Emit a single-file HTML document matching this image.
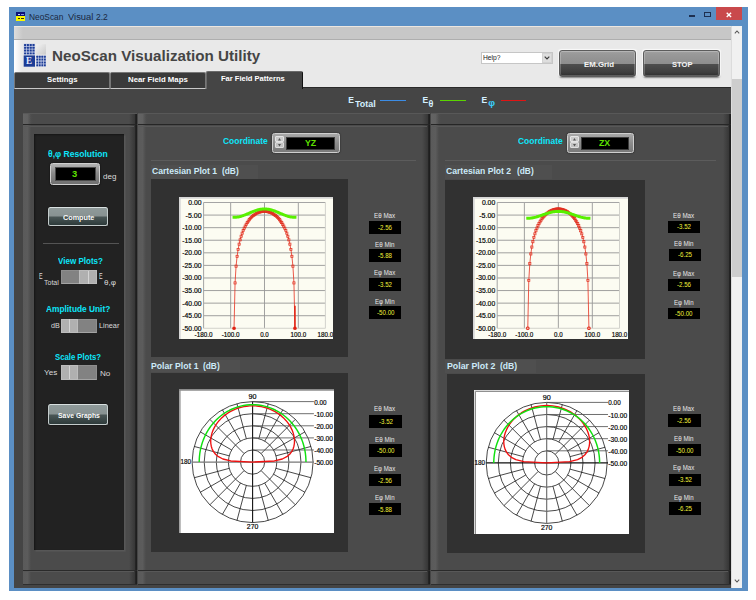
<!DOCTYPE html>
<html><head><meta charset="utf-8"><title>NeoScan Visual 2.2</title>
<style>
html,body{margin:0;padding:0;}
body{width:756px;height:600px;background:#fff;position:relative;overflow:hidden;font-family:"Liberation Sans",sans-serif;}
.t{position:absolute;white-space:nowrap;line-height:1.15;transform-origin:0 50%;display:block;}
</style></head><body>
<div style="position:absolute;left:9.00px;top:7.00px;width:738.80px;height:584.00px;background:#5b8fc4;"></div>
<div style="position:absolute;left:15.80px;top:11.80px;width:9.50px;height:9.00px;background:#f8f800;"></div>
<div style="position:absolute;left:15.80px;top:11.80px;width:9.50px;height:4.00px;background:#0c1478;"></div>
<div style="position:absolute;left:17.50px;top:13.50px;width:2.00px;height:1.00px;background:#c8d0ff;"></div>
<div style="position:absolute;left:21.00px;top:13.50px;width:2.50px;height:1.00px;background:#8090e0;"></div>
<div style="position:absolute;left:17.50px;top:18.20px;width:2.00px;height:1.00px;background:#403000;"></div>
<div style="position:absolute;left:21.00px;top:18.20px;width:2.50px;height:1.00px;background:#403000;"></div>
<span class="t " style="left:29.00px;top:11.08px;font-size:9.6px;color:#1a2840;transform:scaleX(0.8710);">NeoScan</span>
<span class="t " style="left:67.80px;top:11.08px;font-size:9.6px;color:#1a2840;transform:scaleX(0.9779);">Visual</span>
<span class="t " style="left:96.40px;top:11.08px;font-size:9.6px;color:#1a2840;transform:scaleX(0.8842);">2.2</span>
<div style="position:absolute;left:689.30px;top:15.20px;width:5.40px;height:1.50px;background:#1e3050;"></div>
<div style="position:absolute;left:704.30px;top:12.00px;width:6.70px;height:4.70px;border:1px solid #1e3050;border-top-width:1.6px;box-sizing:border-box;"></div>
<div style="position:absolute;left:715.60px;top:7.00px;width:26.40px;height:13.00px;background:#c9494c;"></div>
<svg style="position:absolute;left:726.2px;top:11.6px" width="6" height="6" viewBox="0 0 6 6"><path d="M0.7 0.7L5.1 5.1M5.1 0.7L0.7 5.1" stroke="#fff" stroke-width="1.35"/></svg>
<div style="position:absolute;left:13.50px;top:26.00px;width:728.10px;height:561.70px;background:#444;"></div>
<div style="position:absolute;left:13.50px;top:26.00px;width:717.50px;height:13.50px;background:linear-gradient(to right,#dcdcdc 0,#c7c7c7 9px);border-top:1px solid #ece6e0;border-bottom:1px solid #aeaeae;box-sizing:border-box;"></div>
<div style="position:absolute;left:13.50px;top:39.50px;width:717.50px;height:47.70px;background:linear-gradient(to right,#ffffff 0,#e9e9e9 8px);"></div>
<div style="position:absolute;left:731.00px;top:26.00px;width:10.60px;height:561.70px;background:#f1f1f1;border-left:1px solid #dcdcdc;box-sizing:border-box;"></div>
<div style="position:absolute;left:732.00px;top:79.00px;width:9.60px;height:197.70px;background:#cdcdcd;"></div>
<svg style="position:absolute;left:733.6px;top:29.6px" width="6" height="4" viewBox="0 0 6 4"><path d="M0.8 3.3L3 1L5.2 3.3" stroke="#585858" stroke-width="1.05" fill="none"/></svg>
<svg style="position:absolute;left:733.6px;top:579.4px" width="6" height="4" viewBox="0 0 6 4"><path d="M0.8 0.7L3 3L5.2 0.7" stroke="#585858" stroke-width="1.05" fill="none"/></svg>
<svg style="position:absolute;left:23px;top:43px" width="24" height="25" viewBox="23 43 24 25"><defs><linearGradient id="lgg" x1="0" y1="0" x2="1" y2="1"><stop offset="0" stop-color="#f2f2f2"/><stop offset="1" stop-color="#cbcbcb"/></linearGradient></defs><rect x="23.7" y="43.7" width="11.3" height="11.1" fill="#b8c2e0"/><rect x="24.05" y="44.05" width="2.03" height="1.97" rx="0.5" fill="#1c3c96"/><rect x="24.05" y="46.83" width="2.03" height="1.97" rx="0.5" fill="#1c3c96"/><rect x="24.05" y="49.60" width="2.03" height="1.97" rx="0.5" fill="#1c3c96"/><rect x="24.05" y="52.38" width="2.03" height="1.97" rx="0.5" fill="#1c3c96"/><rect x="26.88" y="44.05" width="2.03" height="1.97" rx="0.5" fill="#1c3c96"/><rect x="26.88" y="46.83" width="2.03" height="1.97" rx="0.5" fill="#1c3c96"/><rect x="26.88" y="49.60" width="2.03" height="1.97" rx="0.5" fill="#1c3c96"/><rect x="26.88" y="52.38" width="2.03" height="1.97" rx="0.5" fill="#1c3c96"/><rect x="29.70" y="44.05" width="2.03" height="1.97" rx="0.5" fill="#1c3c96"/><rect x="29.70" y="46.83" width="2.03" height="1.97" rx="0.5" fill="#1c3c96"/><rect x="29.70" y="49.60" width="2.03" height="1.97" rx="0.5" fill="#1c3c96"/><rect x="29.70" y="52.38" width="2.03" height="1.97" rx="0.5" fill="#1c3c96"/><rect x="32.52" y="44.05" width="2.03" height="1.97" rx="0.5" fill="#1c3c96"/><rect x="32.52" y="46.83" width="2.03" height="1.97" rx="0.5" fill="#1c3c96"/><rect x="32.52" y="49.60" width="2.03" height="1.97" rx="0.5" fill="#1c3c96"/><rect x="32.52" y="52.38" width="2.03" height="1.97" rx="0.5" fill="#1c3c96"/><rect x="36.2" y="44.2" width="9.8" height="10.4" fill="url(#lgg)"/><rect x="23.7" y="55.4" width="11.3" height="11.3" fill="#1c3c96"/><rect x="36.2" y="55.4" width="9.8" height="11.3" fill="#b8c2e0"/><rect x="36.35" y="55.75" width="1.75" height="2.03" rx="0.5" fill="#1c3c96"/><rect x="36.35" y="58.58" width="1.75" height="2.03" rx="0.5" fill="#1c3c96"/><rect x="36.35" y="61.40" width="1.75" height="2.03" rx="0.5" fill="#1c3c96"/><rect x="36.35" y="64.22" width="1.75" height="2.03" rx="0.5" fill="#1c3c96"/><rect x="38.90" y="55.75" width="1.75" height="2.03" rx="0.5" fill="#1c3c96"/><rect x="38.90" y="58.58" width="1.75" height="2.03" rx="0.5" fill="#1c3c96"/><rect x="38.90" y="61.40" width="1.75" height="2.03" rx="0.5" fill="#1c3c96"/><rect x="38.90" y="64.22" width="1.75" height="2.03" rx="0.5" fill="#1c3c96"/><rect x="41.45" y="55.75" width="1.75" height="2.03" rx="0.5" fill="#1c3c96"/><rect x="41.45" y="58.58" width="1.75" height="2.03" rx="0.5" fill="#1c3c96"/><rect x="41.45" y="61.40" width="1.75" height="2.03" rx="0.5" fill="#1c3c96"/><rect x="41.45" y="64.22" width="1.75" height="2.03" rx="0.5" fill="#1c3c96"/><rect x="44.00" y="55.75" width="1.75" height="2.03" rx="0.5" fill="#1c3c96"/><rect x="44.00" y="58.58" width="1.75" height="2.03" rx="0.5" fill="#1c3c96"/><rect x="44.00" y="61.40" width="1.75" height="2.03" rx="0.5" fill="#1c3c96"/><rect x="44.00" y="64.22" width="1.75" height="2.03" rx="0.5" fill="#1c3c96"/></svg>
<span class="t " style="left:26.30px;top:55.35px;font-size:10px;font-weight:bold;color:#e8ecff;transform:scaleX(0.8995);font-family:'Liberation Serif',serif;">E</span>
<span class="t " style="left:51.80px;top:47.39px;font-size:15.5px;font-weight:bold;color:#454545;transform:scaleX(0.9799);">NeoScan Visualization Utility</span>
<div style="position:absolute;left:480.50px;top:51.60px;width:72.20px;height:12.00px;background:#fff;border:1px solid #c6c6c6;box-sizing:border-box;"></div>
<span class="t " style="left:483.00px;top:53.69px;font-size:7.5px;color:#222;transform:scaleX(0.8930);">Help?</span>
<div style="position:absolute;left:541.80px;top:52.60px;width:9.90px;height:10.00px;background:#dedede;border:1px solid #d2d2d2;box-sizing:border-box;"></div>
<svg style="position:absolute;left:544.0px;top:56.2px" width="6" height="4" viewBox="0 0 6 4"><path d="M0.7 0.6L3 3.0L5.3 0.6" stroke="#3c3c3c" stroke-width="1.15" fill="none"/></svg>
<div style="position:absolute;left:559.00px;top:50.00px;width:77.00px;height:27.00px;border-radius:3px;background:linear-gradient(#a2a2a2 0,#999 12%,#8e8e8e 50%,#4e4e4e 52%,#3e3e3e 85%,#2e2e2e 100%);border:1px solid #5c5c5c;box-sizing:border-box;box-shadow:inset 0 0 0 1px rgba(255,255,255,0.22), 0 -0.5px 1px 0.3px #fafafa, 0 1px 1.5px #777;"></div>
<span class="t " style="left:583.50px;top:60.25px;font-size:8px;font-weight:bold;color:#f4f4f4;transform:scaleX(0.9782);">EM.Grid</span>
<div style="position:absolute;left:642.50px;top:50.00px;width:77.50px;height:26.50px;border-radius:3px;background:linear-gradient(#a2a2a2 0,#999 12%,#8e8e8e 50%,#4e4e4e 52%,#3e3e3e 85%,#2e2e2e 100%);border:1px solid #5c5c5c;box-sizing:border-box;box-shadow:inset 0 0 0 1px rgba(255,255,255,0.22), 0 -0.5px 1px 0.3px #fafafa, 0 1px 1.5px #777;"></div>
<span class="t " style="left:671.50px;top:59.98px;font-size:8px;font-weight:bold;color:#f4f4f4;transform:scaleX(0.9474);">STOP</span>
<div style="position:absolute;left:13.50px;top:87.00px;width:717.50px;height:500.70px;background:#454545;border-top:1.2px solid #2a2a2a;box-sizing:border-box;"></div>
<div style="position:absolute;left:14.00px;top:71.60px;width:96.30px;height:17.00px;background:#3a3a3a;border:1px solid #777;border-bottom:1px solid #c8c8c8;box-sizing:border-box;border-radius:2px 2px 0 0;"></div>
<span class="t " style="left:47.00px;top:75.40px;font-size:8px;font-weight:bold;color:#fff;transform:scaleX(0.9664);">Settings</span>
<div style="position:absolute;left:110.30px;top:71.60px;width:95.30px;height:17.00px;background:#3a3a3a;border:1px solid #777;border-bottom:1px solid #c8c8c8;box-sizing:border-box;border-radius:2px 2px 0 0;"></div>
<span class="t " style="left:127.50px;top:75.40px;font-size:8px;font-weight:bold;color:#fff;transform:scaleX(0.9747);">Near Field Maps</span>
<div style="position:absolute;left:205.60px;top:71.00px;width:97.20px;height:18.00px;background:#454545;border:1px solid #6a6a6a;border-bottom:none;border-right:1.3px solid #111;box-sizing:border-box;border-radius:2px 2px 0 0;"></div>
<span class="t " style="left:221.00px;top:73.70px;font-size:8px;font-weight:bold;color:#fff;transform:scaleX(0.9441);">Far Field Patterns</span>
<span class="t " style="left:348.30px;top:96.01px;font-size:8.5px;font-weight:bold;color:#d4f0ff;transform:scaleX(1.0000);">E</span>
<span class="t " style="left:355.30px;top:100.11px;font-size:8.5px;font-weight:bold;color:#d4f0ff;transform:scaleX(1.0522);">Total</span>
<div style="position:absolute;left:380.30px;top:99.60px;width:25.50px;height:1.60px;background:#3c8ce4;"></div>
<span class="t " style="left:422.50px;top:96.01px;font-size:8.5px;font-weight:bold;color:#d4f0ff;transform:scaleX(1.0000);">E</span>
<span class="t " style="left:428.60px;top:98.62px;font-size:9px;font-weight:bold;color:#d4f0ff;transform:scaleX(1.0000);">θ</span>
<div style="position:absolute;left:439.70px;top:99.60px;width:26.30px;height:1.60px;background:#5ad400;"></div>
<span class="t " style="left:481.40px;top:96.01px;font-size:8.5px;font-weight:bold;color:#d4f0ff;transform:scaleX(1.0000);">E</span>
<span class="t " style="left:488.30px;top:97.84px;font-size:9.5px;font-weight:bold;color:#38d0ff;transform:scaleX(1.0000);">φ</span>
<div style="position:absolute;left:500.80px;top:99.60px;width:25.20px;height:1.60px;background:#e01414;"></div>
<div style="position:absolute;left:23.10px;top:113.00px;width:113.50px;height:472.00px;background:linear-gradient(to right,#5a5a5a 0,#5c5c5c 4.5px,#4b4b4b 8px,#4b4b4b calc(100% - 8px),#383838 calc(100% - 2.5px),#1e1e1e calc(100% - 1.2px),#1e1e1e 100%);"></div>
<div style="position:absolute;left:23.10px;top:113.00px;width:113.50px;height:12.40px;background:linear-gradient(to right,rgba(255,255,255,0.06),rgba(0,0,0,0) 10px);border-top:1px solid #585858;border-bottom:1.2px solid #262626;box-sizing:border-box;"></div>
<div style="position:absolute;left:24.10px;top:125.50px;width:109.50px;height:1.00px;background:#585858;"></div>
<div style="position:absolute;left:23.10px;top:570.00px;width:113.50px;height:1.20px;background:#2a2a2a;"></div>
<div style="position:absolute;left:24.10px;top:571.20px;width:109.50px;height:1.00px;background:#585858;"></div>
<div style="position:absolute;left:23.10px;top:583.80px;width:113.50px;height:1.20px;background:#2e2e2e;"></div>
<div style="position:absolute;left:138.00px;top:113.00px;width:292.40px;height:472.00px;background:linear-gradient(to right,#5a5a5a 0,#5c5c5c 4.5px,#4b4b4b 8px,#4b4b4b calc(100% - 8px),#383838 calc(100% - 2.5px),#1e1e1e calc(100% - 1.2px),#1e1e1e 100%);"></div>
<div style="position:absolute;left:138.00px;top:113.00px;width:292.40px;height:12.40px;background:linear-gradient(to right,rgba(255,255,255,0.06),rgba(0,0,0,0) 10px);border-top:1px solid #585858;border-bottom:1.2px solid #262626;box-sizing:border-box;"></div>
<div style="position:absolute;left:139.00px;top:125.50px;width:288.40px;height:1.00px;background:#585858;"></div>
<div style="position:absolute;left:138.00px;top:570.00px;width:292.40px;height:1.20px;background:#2a2a2a;"></div>
<div style="position:absolute;left:139.00px;top:571.20px;width:288.40px;height:1.00px;background:#585858;"></div>
<div style="position:absolute;left:138.00px;top:583.80px;width:292.40px;height:1.20px;background:#2e2e2e;"></div>
<div style="position:absolute;left:431.00px;top:113.00px;width:300.00px;height:472.00px;background:linear-gradient(to right,#5a5a5a 0,#5c5c5c 4.5px,#4b4b4b 8px,#4b4b4b calc(100% - 8px),#383838 calc(100% - 2.5px),#1e1e1e calc(100% - 1.2px),#1e1e1e 100%);"></div>
<div style="position:absolute;left:431.00px;top:113.00px;width:300.00px;height:12.40px;background:linear-gradient(to right,rgba(255,255,255,0.06),rgba(0,0,0,0) 10px);border-top:1px solid #585858;border-bottom:1.2px solid #262626;box-sizing:border-box;"></div>
<div style="position:absolute;left:432.00px;top:125.50px;width:296.00px;height:1.00px;background:#585858;"></div>
<div style="position:absolute;left:431.00px;top:570.00px;width:300.00px;height:1.20px;background:#2a2a2a;"></div>
<div style="position:absolute;left:432.00px;top:571.20px;width:296.00px;height:1.00px;background:#585858;"></div>
<div style="position:absolute;left:431.00px;top:583.80px;width:300.00px;height:1.20px;background:#2e2e2e;"></div>
<div style="position:absolute;left:33.80px;top:134.20px;width:90.10px;height:416.00px;background:#222;box-shadow:inset 1px 1px 2px #151515, 1.6px 1.6px 0 #575757;"></div>
<span class="t " style="left:48.00px;top:148.92px;font-size:9px;font-weight:bold;color:#0ce6fa;transform:scaleX(0.9522);">θ,φ Resolution</span>
<div style="position:absolute;left:50.00px;top:162.50px;width:50.30px;height:22.80px;border-radius:2.5px;background:linear-gradient(#b4b4b4,#8a8a8a 45%,#707070);border:1px solid #d0d0d0;box-sizing:border-box;box-shadow:0 0 1.5px #000;"></div>
<div style="position:absolute;left:54.70px;top:166.70px;width:41.60px;height:14.60px;background:#000;border:1px solid #4a4a4a;box-sizing:border-box;"></div>
<span class="t " style="left:72.00px;top:168.74px;font-size:9.5px;font-weight:bold;color:#5fe000;transform:scaleX(0.9842);">3</span>
<span class="t " style="left:103.30px;top:171.60px;font-size:8px;color:#dcdcdc;transform:scaleX(1.0039);">deg</span>
<div style="position:absolute;left:48.30px;top:206.70px;width:59.70px;height:19.30px;border-radius:2.5px;background:linear-gradient(#8f9a9a 0,#889292 47%,#4a5656 53%,#2e3b3b 100%);border:1px solid #c4cccc;border-top:1.4px solid #d8e0e0;box-sizing:border-box;box-shadow:0 0 1.5px #000;"></div>
<span class="t " style="left:62.80px;top:213.60px;font-size:7.8px;font-weight:bold;color:#fafafa;transform:scaleX(0.9290);">Compute</span>
<div style="position:absolute;left:42.80px;top:242.60px;width:76.10px;height:1.30px;background:#545454;"></div>
<span class="t " style="left:58.00px;top:255.74px;font-size:8.8px;font-weight:bold;color:#0ce6fa;transform:scaleX(0.9141);">View Plots?</span>
<div style="position:absolute;left:61.10px;top:270.00px;width:35.90px;height:14.20px;background:#828282;border:1px solid #8e8e8e;border-bottom-color:#a4a4a4;box-sizing:border-box;"></div>
<div style="position:absolute;left:79.05px;top:270.00px;width:17.95px;height:14.20px;background:#b0b0b0;border:1px solid #bcbcbc;box-sizing:border-box;"></div>
<div style="position:absolute;left:87.53px;top:270.50px;width:1.10px;height:13.20px;background:#d4d4d4;"></div>
<span class="t " style="left:39.40px;top:270.54px;font-size:9.5px;color:#d8d8d8;transform:scaleX(0.5681);">E</span>
<span class="t " style="left:44.20px;top:279.26px;font-size:6.5px;color:#d8d8d8;transform:scaleX(1.0779);">Total</span>
<span class="t " style="left:99.20px;top:270.54px;font-size:9.5px;color:#d8d8d8;transform:scaleX(0.5681);">E</span>
<span class="t " style="left:104.00px;top:278.00px;font-size:8px;color:#d8d8d8;transform:scaleX(1.0119);">θ,φ</span>
<span class="t " style="left:46.00px;top:304.24px;font-size:8.8px;font-weight:bold;color:#0ce6fa;transform:scaleX(0.9463);">Amplitude Unit?</span>
<div style="position:absolute;left:61.10px;top:318.60px;width:35.90px;height:14.40px;background:#828282;border:1px solid #8e8e8e;border-bottom-color:#a4a4a4;box-sizing:border-box;"></div>
<div style="position:absolute;left:61.10px;top:318.60px;width:16.87px;height:14.40px;background:#b0b0b0;border:1px solid #bcbcbc;box-sizing:border-box;"></div>
<div style="position:absolute;left:69.04px;top:319.10px;width:1.10px;height:13.40px;background:#d4d4d4;"></div>
<span class="t " style="left:50.70px;top:322.28px;font-size:7px;color:#d8d8d8;transform:scaleX(1.0277);">dB</span>
<span class="t " style="left:99.00px;top:321.69px;font-size:7.5px;color:#d8d8d8;transform:scaleX(0.9784);">Linear</span>
<span class="t " style="left:54.70px;top:351.64px;font-size:8.8px;font-weight:bold;color:#0ce6fa;transform:scaleX(0.8790);">Scale Plots?</span>
<div style="position:absolute;left:60.80px;top:365.30px;width:36.20px;height:14.30px;background:#828282;border:1px solid #8e8e8e;border-bottom-color:#a4a4a4;box-sizing:border-box;"></div>
<div style="position:absolute;left:60.80px;top:365.30px;width:17.01px;height:14.30px;background:#b0b0b0;border:1px solid #bcbcbc;box-sizing:border-box;"></div>
<div style="position:absolute;left:68.81px;top:365.80px;width:1.10px;height:13.30px;background:#d4d4d4;"></div>
<span class="t " style="left:44.30px;top:367.80px;font-size:8px;color:#d8d8d8;transform:scaleX(1.0191);">Yes</span>
<span class="t " style="left:100.20px;top:368.80px;font-size:8px;color:#d8d8d8;transform:scaleX(1.0169);">No</span>
<div style="position:absolute;left:48.00px;top:403.80px;width:60.40px;height:21.00px;border-radius:2.5px;background:linear-gradient(#8f9a9a 0,#889292 47%,#4a5656 53%,#2e3b3b 100%);border:1px solid #c4cccc;border-top:1.4px solid #d8e0e0;box-sizing:border-box;box-shadow:0 0 1.5px #000;"></div>
<span class="t " style="left:57.70px;top:411.70px;font-size:7.8px;font-weight:bold;color:#fafafa;transform:scaleX(0.8786);">Save Graphs</span>
<span class="t " style="left:222.60px;top:137.01px;font-size:8.5px;font-weight:bold;color:#0ce6fa;transform:scaleX(0.9964);">Coordinate</span>
<div style="position:absolute;left:272.00px;top:133.20px;width:67.80px;height:20.30px;border-radius:2.5px;background:linear-gradient(#a8a8a8,#8c8c8c 50%,#7a7a7a);border:1px solid #cfcfcf;box-sizing:border-box;box-shadow:0 0 1.5px #111;"></div>
<div style="position:absolute;left:275.20px;top:136.40px;width:8.80px;height:5.80px;background:#cacaca;border:1px solid #e4e4e4;box-sizing:border-box;border-radius:1px;"></div>
<div style="position:absolute;left:275.20px;top:142.40px;width:8.80px;height:5.80px;background:#c2c2c2;border:1px solid #dedede;box-sizing:border-box;border-radius:1px;"></div>
<svg style="position:absolute;left:278.10px;top:138.4px" width="3" height="2.4" viewBox="0 0 3 2.4"><path d="M0 2.4L1.5 0L3 2.4Z" fill="#555"/></svg>
<svg style="position:absolute;left:278.10px;top:144.2px" width="3" height="2.4" viewBox="0 0 3 2.4"><path d="M0 0L1.5 2.4L3 0Z" fill="#555"/></svg>
<div style="position:absolute;left:285.90px;top:136.80px;width:49.40px;height:12.90px;background:#000;border:1px solid #3c3c3c;box-sizing:border-box;"></div>
<span class="t " style="left:305.00px;top:138.81px;font-size:8.5px;font-weight:bold;color:#5fe000;transform:scaleX(1.0311);">YZ</span>
<div style="position:absolute;left:151.00px;top:160.00px;width:265.00px;height:1.10px;background:#5c5c5c;"></div>
<div style="position:absolute;left:150.80px;top:165.00px;width:107.20px;height:13.50px;background:#4f4f4f;"></div>
<span class="t " style="left:151.90px;top:166.12px;font-size:9px;font-weight:bold;color:#cdeaf8;transform:scaleX(0.9570);">Cartesian Plot 1</span>
<span class="t " style="left:221.70px;top:166.98px;font-size:8.2px;font-weight:bold;color:#cdeaf8;transform:scaleX(1.0187);">(dB)</span>
<div style="position:absolute;left:150.80px;top:179.20px;width:197.40px;height:178.30px;background:#313131;"></div>
<svg style="position:absolute;left:178.80px;top:196.80px" width="154.70" height="142.60" viewBox="178.80 196.80 154.70 142.60" font-family="Liberation Sans, sans-serif"><rect x="178.80" y="196.80" width="154.70" height="142.60" fill="#fcfcf2"/><path d="M179.65 339.40V197.65H333.50" fill="none" stroke="#d6d6d6" stroke-width="1.7"/><path d="M203.40 214.88H325.20M203.40 227.46H325.20M203.40 240.04H325.20M203.40 252.62H325.20M203.40 265.20H325.20M203.40 277.78H325.20M203.40 290.36H325.20M203.40 302.94H325.20M203.40 315.52H325.20M230.47 202.30V328.10M264.30 202.30V328.10M298.13 202.30V328.10" stroke="#969696" stroke-width="0.9" fill="none"/><path d="M203.40 328.10V202.30H325.20" stroke="#a4a4a4" stroke-width="1" fill="none"/><path d="M203.40 328.10H325.20V202.30" stroke="#d2d2cc" stroke-width="1" fill="none"/><text x="201.40" y="204.80" font-size="7" text-anchor="end" fill="#000" stroke="#000" stroke-width="0.18" textLength="13.30" lengthAdjust="spacingAndGlyphs">0.00</text><text x="201.40" y="217.38" font-size="7" text-anchor="end" fill="#000" stroke="#000" stroke-width="0.18" textLength="16.00" lengthAdjust="spacingAndGlyphs">-5.00</text><text x="201.40" y="229.96" font-size="7" text-anchor="end" fill="#000" stroke="#000" stroke-width="0.18" textLength="19.30" lengthAdjust="spacingAndGlyphs">-10.00</text><text x="201.40" y="242.54" font-size="7" text-anchor="end" fill="#000" stroke="#000" stroke-width="0.18" textLength="19.30" lengthAdjust="spacingAndGlyphs">-15.00</text><text x="201.40" y="255.12" font-size="7" text-anchor="end" fill="#000" stroke="#000" stroke-width="0.18" textLength="19.30" lengthAdjust="spacingAndGlyphs">-20.00</text><text x="201.40" y="267.70" font-size="7" text-anchor="end" fill="#000" stroke="#000" stroke-width="0.18" textLength="19.30" lengthAdjust="spacingAndGlyphs">-25.00</text><text x="201.40" y="280.28" font-size="7" text-anchor="end" fill="#000" stroke="#000" stroke-width="0.18" textLength="19.30" lengthAdjust="spacingAndGlyphs">-30.00</text><text x="201.40" y="292.86" font-size="7" text-anchor="end" fill="#000" stroke="#000" stroke-width="0.18" textLength="19.30" lengthAdjust="spacingAndGlyphs">-35.00</text><text x="201.40" y="305.44" font-size="7" text-anchor="end" fill="#000" stroke="#000" stroke-width="0.18" textLength="19.30" lengthAdjust="spacingAndGlyphs">-40.00</text><text x="201.40" y="318.02" font-size="7" text-anchor="end" fill="#000" stroke="#000" stroke-width="0.18" textLength="19.30" lengthAdjust="spacingAndGlyphs">-45.00</text><text x="201.40" y="330.60" font-size="7" text-anchor="end" fill="#000" stroke="#000" stroke-width="0.18" textLength="19.30" lengthAdjust="spacingAndGlyphs">-50.00</text><text x="203.40" y="337.00" font-size="7" text-anchor="middle" fill="#000" stroke="#000" stroke-width="0.18" textLength="18.00" lengthAdjust="spacingAndGlyphs">-180.0</text><text x="230.47" y="337.00" font-size="7" text-anchor="middle" fill="#000" stroke="#000" stroke-width="0.18" textLength="18.00" lengthAdjust="spacingAndGlyphs">-100.0</text><text x="264.30" y="337.00" font-size="7" text-anchor="middle" fill="#000" stroke="#000" stroke-width="0.18" textLength="8.60" lengthAdjust="spacingAndGlyphs">0.0</text><text x="298.13" y="337.00" font-size="7" text-anchor="middle" fill="#000" stroke="#000" stroke-width="0.18" textLength="15.60" lengthAdjust="spacingAndGlyphs">100.0</text><text x="325.20" y="337.00" font-size="7" text-anchor="middle" fill="#000" stroke="#000" stroke-width="0.18" textLength="15.60" lengthAdjust="spacingAndGlyphs">180.0</text><defs><marker id="mra" markerWidth="4" markerHeight="4" refX="2" refY="2" markerUnits="userSpaceOnUse"><rect x="0.9" y="0.9" width="2.2" height="2.2" fill="none" stroke="#e02818" stroke-width="0.65"/></marker></defs><polyline points="233.85,328.10 234.87,282.72 235.88,265.94 236.90,256.16 237.91,249.26 238.93,243.94 239.94,239.64 240.96,236.05 241.97,232.98 242.99,230.31 244.00,227.97 245.01,225.90 246.03,224.05 247.05,222.39 248.06,220.90 249.07,219.56 250.09,218.36 251.10,217.27 252.12,216.30 253.13,215.42 254.15,214.65 255.16,213.96 256.18,213.35 257.19,212.82 258.21,212.37 259.23,212.00 260.24,211.69 261.25,211.46 262.27,211.29 263.28,211.19 264.30,211.16 265.31,211.19 266.33,211.29 267.35,211.46 268.36,211.69 269.38,212.00 270.39,212.37 271.40,212.82 272.42,213.35 273.44,213.96 274.45,214.65 275.47,215.42 276.48,216.30 277.50,217.27 278.51,218.36 279.52,219.56 280.54,220.90 281.56,222.39 282.57,224.05 283.58,225.90 284.60,227.97 285.62,230.31 286.63,232.98 287.64,236.05 288.66,239.64 289.68,243.94 290.69,249.26 291.70,256.16 292.72,265.94 293.74,282.72 294.75,328.10" fill="none" stroke="#e63020" stroke-width="0.8" marker-start="url(#mra)" marker-mid="url(#mra)" marker-end="url(#mra)"/><path d="M294.75 305.46V328.10" stroke="#e02010" stroke-width="1.5"/><circle cx="233.85" cy="328.10" r="1.5" fill="#e02010"/><circle cx="294.75" cy="328.10" r="1.5" fill="#e02010"/><polyline points="233.85,217.09 234.87,217.07 235.88,217.00 236.90,216.89 237.91,216.73 238.93,216.53 239.94,216.30 240.96,216.02 241.97,215.71 242.99,215.37 244.00,215.01 245.01,214.62 246.03,214.21 247.05,213.79 248.06,213.35 249.07,212.92 250.09,212.48 251.10,212.05 252.12,211.63 253.13,211.22 254.15,210.83 255.16,210.46 256.18,210.12 257.19,209.81 258.21,209.54 259.23,209.30 260.24,209.10 261.25,208.95 262.27,208.83 263.28,208.76 264.30,208.74 265.31,208.76 266.33,208.83 267.35,208.95 268.36,209.10 269.38,209.30 270.39,209.54 271.40,209.81 272.42,210.12 273.44,210.46 274.45,210.83 275.47,211.22 276.48,211.63 277.50,212.05 278.51,212.48 279.52,212.92 280.54,213.35 281.56,213.79 282.57,214.21 283.58,214.62 284.60,215.01 285.62,215.37 286.63,215.71 287.64,216.02 288.66,216.30 289.68,216.53 290.69,216.73 291.70,216.89 292.72,217.00 293.74,217.07 294.75,217.09" fill="none" stroke="#58f000" stroke-width="3.0" stroke-linecap="square"/></svg>
<span class="t " style="left:374.40px;top:212.17px;font-size:7px;color:#e6e6e6;transform:scaleX(0.8933);">Eθ Max</span>
<div style="position:absolute;left:369.40px;top:221.10px;width:32.00px;height:12.60px;background:#000;"></div>
<span class="t " style="left:378.40px;top:223.96px;font-size:6.5px;color:#f0f03a;transform:scaleX(0.9449);">-2.56</span>
<span class="t " style="left:375.20px;top:240.67px;font-size:7px;color:#e6e6e6;transform:scaleX(0.8996);">Eθ Min</span>
<div style="position:absolute;left:369.40px;top:249.30px;width:32.00px;height:12.40px;background:#000;"></div>
<span class="t " style="left:378.40px;top:252.06px;font-size:6.5px;color:#f0f03a;transform:scaleX(0.9449);">-5.88</span>
<span class="t " style="left:374.40px;top:269.28px;font-size:7px;color:#e6e6e6;transform:scaleX(0.8697);">Eφ Max</span>
<div style="position:absolute;left:369.40px;top:278.00px;width:32.00px;height:12.60px;background:#000;"></div>
<span class="t " style="left:378.40px;top:280.86px;font-size:6.5px;color:#f0f03a;transform:scaleX(0.9449);">-3.52</span>
<span class="t " style="left:375.20px;top:298.18px;font-size:7px;color:#e6e6e6;transform:scaleX(0.8737);">Eφ Min</span>
<div style="position:absolute;left:369.40px;top:306.40px;width:32.00px;height:12.20px;background:#000;"></div>
<span class="t " style="left:376.65px;top:309.06px;font-size:6.5px;color:#f0f03a;transform:scaleX(0.9495);">-50.00</span>
<div style="position:absolute;left:150.80px;top:359.50px;width:89.20px;height:12.70px;background:#4f4f4f;"></div>
<span class="t " style="left:150.80px;top:360.82px;font-size:9px;font-weight:bold;color:#cdeaf8;transform:scaleX(0.9593);">Polar Plot 1</span>
<span class="t " style="left:202.70px;top:361.69px;font-size:8.2px;font-weight:bold;color:#cdeaf8;transform:scaleX(1.0187);">(dB)</span>
<div style="position:absolute;left:150.80px;top:372.80px;width:197.40px;height:179.50px;background:#313131;"></div>
<svg style="position:absolute;left:178.90px;top:388.90px" width="155.60" height="144.40" viewBox="178.90 388.90 155.60 144.40" font-family="Liberation Sans, sans-serif"><rect x="178.90" y="388.90" width="155.60" height="144.40" fill="#fff"/><path d="M179.75 533.30V389.75" fill="none" stroke="#a2a2a2" stroke-width="1.7"/><path d="M178.90 389.75H334.50" fill="none" stroke="#8c8c8c" stroke-width="1.7"/><circle cx="252.50" cy="462.00" r="12.10" fill="none" stroke="#1a1a1a" stroke-width="0.8"/><circle cx="252.50" cy="462.00" r="24.20" fill="none" stroke="#1a1a1a" stroke-width="0.8"/><circle cx="252.50" cy="462.00" r="36.30" fill="none" stroke="#1a1a1a" stroke-width="0.8"/><circle cx="252.50" cy="462.00" r="48.40" fill="none" stroke="#1a1a1a" stroke-width="0.8"/><circle cx="252.50" cy="462.00" r="60.50" fill="none" stroke="#1a1a1a" stroke-width="0.8"/><path d="M275.88 455.74L310.94 446.34M273.46 449.90L304.89 431.75M261.06 453.44L295.28 419.22M264.60 441.04L282.75 409.61M258.76 438.62L268.16 403.56M246.24 438.62L236.84 403.56M240.40 441.04L222.25 409.61M243.94 453.44L209.72 419.22M231.54 449.90L200.11 431.75M229.12 455.74L194.06 446.34M229.12 468.26L194.06 477.66M231.54 474.10L200.11 492.25M243.94 470.56L209.72 504.78M240.40 482.96L222.25 514.39M246.24 485.38L236.84 520.44M258.76 485.38L268.16 520.44M264.60 482.96L282.75 514.39M261.06 470.56L295.28 504.78M273.46 474.10L304.89 492.25M275.88 468.26L310.94 477.66" stroke="#1a1a1a" stroke-width="0.8" fill="none"/><path d="M252.50 401.50V522.50" stroke="#111" stroke-width="1.1"/><path d="M192.00 462.00H313.80" stroke="#777" stroke-width="1.1"/><path d="M252.50 401.50H313.80M252.50 413.60H313.80M252.50 425.70H313.80M252.50 437.80H313.80M252.50 449.90H313.80" stroke="#4a4a4a" stroke-width="0.8" fill="none"/><text x="314.10" y="404.60" font-size="7" text-anchor="start" fill="#000" stroke="#000" stroke-width="0.18" textLength="12.40" lengthAdjust="spacingAndGlyphs">0.00</text><text x="314.10" y="416.70" font-size="7" text-anchor="start" fill="#000" stroke="#000" stroke-width="0.18" textLength="18.80" lengthAdjust="spacingAndGlyphs">-10.00</text><text x="314.10" y="428.80" font-size="7" text-anchor="start" fill="#000" stroke="#000" stroke-width="0.18" textLength="18.80" lengthAdjust="spacingAndGlyphs">-20.00</text><text x="314.10" y="440.90" font-size="7" text-anchor="start" fill="#000" stroke="#000" stroke-width="0.18" textLength="18.80" lengthAdjust="spacingAndGlyphs">-30.00</text><text x="314.10" y="453.00" font-size="7" text-anchor="start" fill="#000" stroke="#000" stroke-width="0.18" textLength="18.80" lengthAdjust="spacingAndGlyphs">-40.00</text><text x="314.10" y="465.10" font-size="7" text-anchor="start" fill="#000" stroke="#000" stroke-width="0.18" textLength="18.80" lengthAdjust="spacingAndGlyphs">-50.00</text><text x="252.50" y="398.80" font-size="7" text-anchor="middle" fill="#000" stroke="#000" stroke-width="0.18" textLength="8.00" lengthAdjust="spacingAndGlyphs">90</text><text x="252.50" y="529.30" font-size="7" text-anchor="middle" fill="#000" stroke="#000" stroke-width="0.18" textLength="11.50" lengthAdjust="spacingAndGlyphs">270</text><text x="190.80" y="464.40" font-size="6.5" text-anchor="end" fill="#000" stroke="#000" stroke-width="0.18" textLength="10.50" lengthAdjust="spacingAndGlyphs">180</text><polyline points="252.50,462.00 274.30,460.86 282.23,458.88 286.67,456.59 289.59,454.12 291.59,451.52 292.96,448.85 293.83,446.14 294.29,443.39 294.40,440.65 294.20,437.92 293.72,435.23 292.98,432.59 292.01,430.01 290.81,427.50 289.41,425.09 287.82,422.78 286.04,420.58 284.10,418.50 282.01,416.55 279.78,414.75 277.42,413.09 274.95,411.59 272.37,410.24 269.70,409.07 266.95,408.07 264.14,407.24 261.28,406.59 258.37,406.13 255.44,405.85 252.50,405.76 249.56,405.85 246.63,406.13 243.72,406.59 240.86,407.24 238.05,408.07 235.30,409.07 232.63,410.24 230.05,411.59 227.58,413.09 225.22,414.75 222.99,416.55 220.90,418.50 218.96,420.58 217.18,422.78 215.59,425.09 214.19,427.50 212.99,430.01 212.02,432.59 211.28,435.23 210.80,437.92 210.60,440.65 210.71,443.39 211.17,446.14 212.04,448.85 213.41,451.52 215.41,454.12 218.33,456.59 222.77,458.88 230.70,460.86 252.50,462.00" fill="none" stroke="#f01010" stroke-width="1.35" stroke-linejoin="round"/><polyline points="305.89,462.00 305.82,459.21 305.64,456.42 305.33,453.63 304.89,450.86 304.33,448.11 303.64,445.38 302.82,442.68 301.88,440.02 300.80,437.39 299.60,434.81 298.27,432.28 296.81,429.81 295.22,427.40 293.51,425.07 291.67,422.83 289.71,420.68 287.62,418.63 285.42,416.68 283.11,414.86 280.70,413.16 278.18,411.59 275.58,410.17 272.89,408.89 270.12,407.77 267.29,406.81 264.40,406.02 261.46,405.40 258.50,404.96 255.50,404.69 252.50,404.60 249.50,404.69 246.50,404.96 243.54,405.40 240.60,406.02 237.71,406.81 234.88,407.77 232.11,408.89 229.42,410.17 226.82,411.59 224.30,413.16 221.89,414.86 219.58,416.68 217.38,418.63 215.29,420.68 213.33,422.83 211.49,425.07 209.78,427.40 208.19,429.81 206.73,432.28 205.40,434.81 204.20,437.39 203.12,440.02 202.18,442.68 201.36,445.38 200.67,448.11 200.11,450.86 199.67,453.63 199.36,456.42 199.18,459.21 199.11,462.00" fill="none" stroke="#10e010" stroke-width="1.45" stroke-linejoin="round"/></svg>
<span class="t " style="left:374.40px;top:405.38px;font-size:7px;color:#e6e6e6;transform:scaleX(0.8933);">Eθ Max</span>
<div style="position:absolute;left:369.40px;top:414.50px;width:32.40px;height:13.30px;background:#000;"></div>
<span class="t " style="left:378.60px;top:417.71px;font-size:6.5px;color:#f0f03a;transform:scaleX(0.9449);">-3.52</span>
<span class="t " style="left:375.20px;top:435.68px;font-size:7px;color:#e6e6e6;transform:scaleX(0.8996);">Eθ Min</span>
<div style="position:absolute;left:369.40px;top:444.30px;width:32.40px;height:12.40px;background:#000;"></div>
<span class="t " style="left:376.85px;top:447.06px;font-size:6.5px;color:#f0f03a;transform:scaleX(0.9495);">-50.00</span>
<span class="t " style="left:374.40px;top:465.28px;font-size:7px;color:#e6e6e6;transform:scaleX(0.8697);">Eφ Max</span>
<div style="position:absolute;left:368.70px;top:474.40px;width:32.50px;height:11.90px;background:#000;"></div>
<span class="t " style="left:377.95px;top:476.91px;font-size:6.5px;color:#f0f03a;transform:scaleX(0.9449);">-2.56</span>
<span class="t " style="left:375.20px;top:493.98px;font-size:7px;color:#e6e6e6;transform:scaleX(0.8737);">Eφ Min</span>
<div style="position:absolute;left:368.70px;top:503.10px;width:32.50px;height:12.40px;background:#000;"></div>
<span class="t " style="left:377.95px;top:505.86px;font-size:6.5px;color:#f0f03a;transform:scaleX(0.9449);">-5.88</span>
<span class="t " style="left:517.60px;top:137.01px;font-size:8.5px;font-weight:bold;color:#0ce6fa;transform:scaleX(0.9964);">Coordinate</span>
<div style="position:absolute;left:566.60px;top:133.20px;width:67.20px;height:20.30px;border-radius:2.5px;background:linear-gradient(#a8a8a8,#8c8c8c 50%,#7a7a7a);border:1px solid #cfcfcf;box-sizing:border-box;box-shadow:0 0 1.5px #111;"></div>
<div style="position:absolute;left:569.80px;top:136.40px;width:8.80px;height:5.80px;background:#cacaca;border:1px solid #e4e4e4;box-sizing:border-box;border-radius:1px;"></div>
<div style="position:absolute;left:569.80px;top:142.40px;width:8.80px;height:5.80px;background:#c2c2c2;border:1px solid #dedede;box-sizing:border-box;border-radius:1px;"></div>
<svg style="position:absolute;left:572.70px;top:138.4px" width="3" height="2.4" viewBox="0 0 3 2.4"><path d="M0 2.4L1.5 0L3 2.4Z" fill="#555"/></svg>
<svg style="position:absolute;left:572.70px;top:144.2px" width="3" height="2.4" viewBox="0 0 3 2.4"><path d="M0 0L1.5 2.4L3 0Z" fill="#555"/></svg>
<div style="position:absolute;left:580.50px;top:136.80px;width:48.80px;height:12.90px;background:#000;border:1px solid #3c3c3c;box-sizing:border-box;"></div>
<span class="t " style="left:599.30px;top:138.81px;font-size:8.5px;font-weight:bold;color:#5fe000;transform:scaleX(1.0311);">ZX</span>
<div style="position:absolute;left:445.00px;top:160.00px;width:271.20px;height:1.10px;background:#5c5c5c;"></div>
<div style="position:absolute;left:445.30px;top:165.00px;width:106.70px;height:14.00px;background:#4f4f4f;"></div>
<span class="t " style="left:446.40px;top:165.82px;font-size:9px;font-weight:bold;color:#cdeaf8;transform:scaleX(0.9570);">Cartesian Plot 2</span>
<span class="t " style="left:517.00px;top:166.69px;font-size:8.2px;font-weight:bold;color:#cdeaf8;transform:scaleX(1.0187);">(dB)</span>
<div style="position:absolute;left:445.30px;top:180.00px;width:199.40px;height:178.70px;background:#313131;"></div>
<svg style="position:absolute;left:473.20px;top:196.80px" width="155.10" height="142.60" viewBox="473.20 196.80 155.10 142.60" font-family="Liberation Sans, sans-serif"><rect x="473.20" y="196.80" width="155.10" height="142.60" fill="#fcfcf2"/><path d="M474.05 339.40V197.65H628.30" fill="none" stroke="#d6d6d6" stroke-width="1.7"/><path d="M497.40 214.88H619.70M497.40 227.46H619.70M497.40 240.04H619.70M497.40 252.62H619.70M497.40 265.20H619.70M497.40 277.78H619.70M497.40 290.36H619.70M497.40 302.94H619.70M497.40 315.52H619.70M524.58 202.30V328.10M558.55 202.30V328.10M592.52 202.30V328.10" stroke="#969696" stroke-width="0.9" fill="none"/><path d="M497.40 328.10V202.30H619.70" stroke="#a4a4a4" stroke-width="1" fill="none"/><path d="M497.40 328.10H619.70V202.30" stroke="#d2d2cc" stroke-width="1" fill="none"/><text x="495.40" y="204.80" font-size="7" text-anchor="end" fill="#000" stroke="#000" stroke-width="0.18" textLength="13.30" lengthAdjust="spacingAndGlyphs">0.00</text><text x="495.40" y="217.38" font-size="7" text-anchor="end" fill="#000" stroke="#000" stroke-width="0.18" textLength="16.00" lengthAdjust="spacingAndGlyphs">-5.00</text><text x="495.40" y="229.96" font-size="7" text-anchor="end" fill="#000" stroke="#000" stroke-width="0.18" textLength="19.30" lengthAdjust="spacingAndGlyphs">-10.00</text><text x="495.40" y="242.54" font-size="7" text-anchor="end" fill="#000" stroke="#000" stroke-width="0.18" textLength="19.30" lengthAdjust="spacingAndGlyphs">-15.00</text><text x="495.40" y="255.12" font-size="7" text-anchor="end" fill="#000" stroke="#000" stroke-width="0.18" textLength="19.30" lengthAdjust="spacingAndGlyphs">-20.00</text><text x="495.40" y="267.70" font-size="7" text-anchor="end" fill="#000" stroke="#000" stroke-width="0.18" textLength="19.30" lengthAdjust="spacingAndGlyphs">-25.00</text><text x="495.40" y="280.28" font-size="7" text-anchor="end" fill="#000" stroke="#000" stroke-width="0.18" textLength="19.30" lengthAdjust="spacingAndGlyphs">-30.00</text><text x="495.40" y="292.86" font-size="7" text-anchor="end" fill="#000" stroke="#000" stroke-width="0.18" textLength="19.30" lengthAdjust="spacingAndGlyphs">-35.00</text><text x="495.40" y="305.44" font-size="7" text-anchor="end" fill="#000" stroke="#000" stroke-width="0.18" textLength="19.30" lengthAdjust="spacingAndGlyphs">-40.00</text><text x="495.40" y="318.02" font-size="7" text-anchor="end" fill="#000" stroke="#000" stroke-width="0.18" textLength="19.30" lengthAdjust="spacingAndGlyphs">-45.00</text><text x="495.40" y="330.60" font-size="7" text-anchor="end" fill="#000" stroke="#000" stroke-width="0.18" textLength="19.30" lengthAdjust="spacingAndGlyphs">-50.00</text><text x="497.40" y="337.00" font-size="7" text-anchor="middle" fill="#000" stroke="#000" stroke-width="0.18" textLength="18.00" lengthAdjust="spacingAndGlyphs">-180.0</text><text x="524.58" y="337.00" font-size="7" text-anchor="middle" fill="#000" stroke="#000" stroke-width="0.18" textLength="18.00" lengthAdjust="spacingAndGlyphs">-100.0</text><text x="558.55" y="337.00" font-size="7" text-anchor="middle" fill="#000" stroke="#000" stroke-width="0.18" textLength="8.60" lengthAdjust="spacingAndGlyphs">0.0</text><text x="592.52" y="337.00" font-size="7" text-anchor="middle" fill="#000" stroke="#000" stroke-width="0.18" textLength="15.60" lengthAdjust="spacingAndGlyphs">100.0</text><text x="619.70" y="337.00" font-size="7" text-anchor="middle" fill="#000" stroke="#000" stroke-width="0.18" textLength="15.60" lengthAdjust="spacingAndGlyphs">180.0</text><defs><marker id="mrb" markerWidth="4" markerHeight="4" refX="2" refY="2" markerUnits="userSpaceOnUse"><rect x="0.9" y="0.9" width="2.2" height="2.2" fill="none" stroke="#e02818" stroke-width="0.65"/></marker></defs><polyline points="527.98,328.10 528.99,280.30 530.01,263.52 531.03,253.74 532.05,246.84 533.07,241.53 534.09,237.23 535.11,233.63 536.13,230.56 537.15,227.90 538.17,225.56 539.19,223.48 540.21,221.63 541.22,219.98 542.24,218.49 543.26,217.15 544.28,215.94 545.30,214.86 546.32,213.88 547.34,213.01 548.36,212.23 549.38,211.54 550.40,210.93 551.42,210.41 552.44,209.96 553.45,209.58 554.47,209.28 555.49,209.04 556.51,208.87 557.53,208.77 558.55,208.74 559.57,208.77 560.59,208.87 561.61,209.04 562.63,209.28 563.65,209.58 564.66,209.96 565.68,210.41 566.70,210.93 567.72,211.54 568.74,212.23 569.76,213.01 570.78,213.88 571.80,214.86 572.82,215.94 573.84,217.15 574.86,218.49 575.88,219.98 576.89,221.63 577.91,223.48 578.93,225.56 579.95,227.90 580.97,230.56 581.99,233.63 583.01,237.23 584.03,241.53 585.05,246.84 586.07,253.74 587.09,263.52 588.11,280.30 589.12,328.10" fill="none" stroke="#e63020" stroke-width="0.8" marker-start="url(#mrb)" marker-mid="url(#mrb)" marker-end="url(#mrb)"/><circle cx="527.98" cy="328.10" r="1.3" fill="#f8b0a0" stroke="#e02010" stroke-width="0.8"/><circle cx="589.12" cy="328.10" r="1.3" fill="#f8b0a0" stroke="#e02010" stroke-width="0.8"/><polyline points="527.98,218.03 528.99,218.01 530.01,217.95 531.03,217.86 532.05,217.73 533.07,217.56 534.09,217.37 535.11,217.14 536.13,216.89 537.15,216.61 538.17,216.31 539.19,215.99 540.21,215.65 541.22,215.30 542.24,214.95 543.26,214.59 544.28,214.23 545.30,213.88 546.32,213.53 547.34,213.19 548.36,212.87 549.38,212.57 550.40,212.29 551.42,212.04 552.44,211.81 553.45,211.62 554.47,211.45 555.49,211.32 556.51,211.23 557.53,211.18 558.55,211.16 559.57,211.18 560.59,211.23 561.61,211.32 562.63,211.45 563.65,211.62 564.66,211.81 565.68,212.04 566.70,212.29 567.72,212.57 568.74,212.87 569.76,213.19 570.78,213.53 571.80,213.88 572.82,214.23 573.84,214.59 574.86,214.95 575.88,215.30 576.89,215.65 577.91,215.99 578.93,216.31 579.95,216.61 580.97,216.89 581.99,217.14 583.01,217.37 584.03,217.56 585.05,217.73 586.07,217.86 587.09,217.95 588.11,218.01 589.12,218.03" fill="none" stroke="#58f000" stroke-width="3.0" stroke-linecap="square"/></svg>
<span class="t " style="left:673.20px;top:211.97px;font-size:7px;color:#e6e6e6;transform:scaleX(0.8933);">Eθ Max</span>
<div style="position:absolute;left:668.00px;top:220.70px;width:32.20px;height:12.10px;background:#000;"></div>
<span class="t " style="left:677.10px;top:223.31px;font-size:6.5px;color:#f0f03a;transform:scaleX(0.9449);">-3.52</span>
<span class="t " style="left:674.00px;top:240.47px;font-size:7px;color:#e6e6e6;transform:scaleX(0.8996);">Eθ Min</span>
<div style="position:absolute;left:669.00px;top:248.70px;width:32.20px;height:12.30px;background:#000;"></div>
<span class="t " style="left:678.10px;top:251.41px;font-size:6.5px;color:#f0f03a;transform:scaleX(0.9449);">-6.25</span>
<span class="t " style="left:673.20px;top:269.68px;font-size:7px;color:#e6e6e6;transform:scaleX(0.8697);">Eφ Max</span>
<div style="position:absolute;left:668.00px;top:278.60px;width:31.50px;height:12.60px;background:#000;"></div>
<span class="t " style="left:676.75px;top:281.46px;font-size:6.5px;color:#f0f03a;transform:scaleX(0.9449);">-2.56</span>
<span class="t " style="left:674.00px;top:298.68px;font-size:7px;color:#e6e6e6;transform:scaleX(0.8737);">Eφ Min</span>
<div style="position:absolute;left:668.00px;top:307.50px;width:31.50px;height:11.90px;background:#000;"></div>
<span class="t " style="left:675.00px;top:310.01px;font-size:6.5px;color:#f0f03a;transform:scaleX(0.9495);">-50.00</span>
<div style="position:absolute;left:445.30px;top:360.00px;width:90.70px;height:13.20px;background:#4f4f4f;"></div>
<span class="t " style="left:446.90px;top:361.22px;font-size:9px;font-weight:bold;color:#cdeaf8;transform:scaleX(0.9775);">Polar Plot 2</span>
<span class="t " style="left:500.00px;top:362.09px;font-size:8.2px;font-weight:bold;color:#cdeaf8;transform:scaleX(1.0492);">(dB)</span>
<div style="position:absolute;left:446.50px;top:373.80px;width:198.20px;height:179.20px;background:#313131;"></div>
<svg style="position:absolute;left:473.70px;top:389.70px" width="155.10" height="144.10" viewBox="473.70 389.70 155.10 144.10" font-family="Liberation Sans, sans-serif"><rect x="473.70" y="389.70" width="155.10" height="144.10" fill="#fff"/><path d="M474.20 533.80V390.20H628.80" fill="none" stroke="#e2e2e2" stroke-width="1"/><path d="M475.15 533.80V391.15H628.80" fill="none" stroke="#7c7c7c" stroke-width="0.9"/><circle cx="546.40" cy="462.60" r="12.10" fill="none" stroke="#1a1a1a" stroke-width="0.8"/><circle cx="546.40" cy="462.60" r="24.20" fill="none" stroke="#1a1a1a" stroke-width="0.8"/><circle cx="546.40" cy="462.60" r="36.30" fill="none" stroke="#1a1a1a" stroke-width="0.8"/><circle cx="546.40" cy="462.60" r="48.40" fill="none" stroke="#1a1a1a" stroke-width="0.8"/><circle cx="546.40" cy="462.60" r="60.50" fill="none" stroke="#1a1a1a" stroke-width="0.8"/><path d="M569.78 456.34L604.84 446.94M567.36 450.50L598.79 432.35M554.96 454.04L589.18 419.82M558.50 441.64L576.65 410.21M552.66 439.22L562.06 404.16M540.14 439.22L530.74 404.16M534.30 441.64L516.15 410.21M537.84 454.04L503.62 419.82M525.44 450.50L494.01 432.35M523.02 456.34L487.96 446.94M523.02 468.86L487.96 478.26M525.44 474.70L494.01 492.85M537.84 471.16L503.62 505.38M534.30 483.56L516.15 514.99M540.14 485.98L530.74 521.04M552.66 485.98L562.06 521.04M558.50 483.56L576.65 514.99M554.96 471.16L589.18 505.38M567.36 474.70L598.79 492.85M569.78 468.86L604.84 478.26" stroke="#1a1a1a" stroke-width="0.8" fill="none"/><path d="M546.40 402.10V523.10" stroke="#666" stroke-width="1.1"/><path d="M485.90 462.60H607.70" stroke="#111" stroke-width="1.1"/><path d="M546.40 402.10H607.70M546.40 414.20H607.70M546.40 426.30H607.70M546.40 438.40H607.70M546.40 450.50H607.70" stroke="#4a4a4a" stroke-width="0.8" fill="none"/><text x="608.00" y="405.20" font-size="7" text-anchor="start" fill="#000" stroke="#000" stroke-width="0.18" textLength="12.40" lengthAdjust="spacingAndGlyphs">0.00</text><text x="608.00" y="417.30" font-size="7" text-anchor="start" fill="#000" stroke="#000" stroke-width="0.18" textLength="18.80" lengthAdjust="spacingAndGlyphs">-10.00</text><text x="608.00" y="429.40" font-size="7" text-anchor="start" fill="#000" stroke="#000" stroke-width="0.18" textLength="18.80" lengthAdjust="spacingAndGlyphs">-20.00</text><text x="608.00" y="441.50" font-size="7" text-anchor="start" fill="#000" stroke="#000" stroke-width="0.18" textLength="18.80" lengthAdjust="spacingAndGlyphs">-30.00</text><text x="608.00" y="453.60" font-size="7" text-anchor="start" fill="#000" stroke="#000" stroke-width="0.18" textLength="18.80" lengthAdjust="spacingAndGlyphs">-40.00</text><text x="608.00" y="465.70" font-size="7" text-anchor="start" fill="#000" stroke="#000" stroke-width="0.18" textLength="18.80" lengthAdjust="spacingAndGlyphs">-50.00</text><text x="546.40" y="399.40" font-size="7" text-anchor="middle" fill="#000" stroke="#000" stroke-width="0.18" textLength="8.00" lengthAdjust="spacingAndGlyphs">90</text><text x="546.40" y="529.90" font-size="7" text-anchor="middle" fill="#000" stroke="#000" stroke-width="0.18" textLength="11.50" lengthAdjust="spacingAndGlyphs">270</text><text x="484.70" y="465.00" font-size="6.5" text-anchor="end" fill="#000" stroke="#000" stroke-width="0.18" textLength="10.50" lengthAdjust="spacingAndGlyphs">180</text><polyline points="546.40,462.60 569.36,461.40 577.29,459.35 581.72,457.01 584.63,454.47 586.62,451.82 587.96,449.10 588.81,446.32 589.25,443.52 589.34,440.72 589.11,437.94 588.60,435.20 587.82,432.50 586.81,429.88 585.58,427.33 584.13,424.87 582.49,422.52 580.67,420.28 578.69,418.16 576.55,416.18 574.26,414.34 571.85,412.65 569.32,411.12 566.68,409.76 563.96,408.56 561.15,407.54 558.28,406.70 555.36,406.05 552.39,405.58 549.40,405.29 546.40,405.20 543.40,405.29 540.41,405.58 537.44,406.05 534.52,406.70 531.65,407.54 528.84,408.56 526.12,409.76 523.48,411.12 520.95,412.65 518.54,414.34 516.25,416.18 514.11,418.16 512.13,420.28 510.31,422.52 508.67,424.87 507.22,427.33 505.99,429.88 504.98,432.50 504.20,435.20 503.69,437.94 503.46,440.72 503.55,443.52 503.99,446.32 504.84,449.10 506.18,451.82 508.17,454.47 511.08,457.01 515.51,459.35 523.44,461.40 546.40,462.60" fill="none" stroke="#f01010" stroke-width="1.35" stroke-linejoin="round"/><polyline points="599.34,462.60 599.27,459.83 599.08,457.06 598.77,454.31 598.32,451.56 597.75,448.84 597.05,446.14 596.22,443.48 595.26,440.85 594.17,438.26 592.96,435.72 591.62,433.23 590.15,430.81 588.56,428.46 586.84,426.19 585.00,424.00 583.04,421.90 580.97,419.91 578.79,418.02 576.50,416.25 574.11,414.61 571.62,413.10 569.05,411.72 566.40,410.49 563.68,409.41 560.90,408.49 558.06,407.73 555.19,407.13 552.27,406.70 549.34,406.45 546.40,406.36 543.46,406.45 540.53,406.70 537.61,407.13 534.74,407.73 531.90,408.49 529.12,409.41 526.40,410.49 523.75,411.72 521.18,413.10 518.69,414.61 516.30,416.25 514.01,418.02 511.83,419.91 509.76,421.90 507.80,424.00 505.96,426.19 504.24,428.46 502.65,430.81 501.18,433.23 499.84,435.72 498.63,438.26 497.54,440.85 496.58,443.48 495.75,446.14 495.05,448.84 494.48,451.56 494.03,454.31 493.72,457.06 493.53,459.83 493.46,462.60" fill="none" stroke="#10e010" stroke-width="1.45" stroke-linejoin="round"/></svg>
<span class="t " style="left:672.70px;top:405.38px;font-size:7px;color:#e6e6e6;transform:scaleX(0.8933);">Eθ Max</span>
<div style="position:absolute;left:668.00px;top:414.00px;width:32.70px;height:13.30px;background:#000;"></div>
<span class="t " style="left:677.35px;top:417.21px;font-size:6.5px;color:#f0f03a;transform:scaleX(0.9449);">-2.56</span>
<span class="t " style="left:673.50px;top:434.98px;font-size:7px;color:#e6e6e6;transform:scaleX(0.8996);">Eθ Min</span>
<div style="position:absolute;left:668.00px;top:443.70px;width:32.70px;height:12.80px;background:#000;"></div>
<span class="t " style="left:675.60px;top:446.66px;font-size:6.5px;color:#f0f03a;transform:scaleX(0.9495);">-50.00</span>
<span class="t " style="left:672.70px;top:464.38px;font-size:7px;color:#e6e6e6;transform:scaleX(0.8697);">Eφ Max</span>
<div style="position:absolute;left:669.20px;top:473.60px;width:31.80px;height:12.60px;background:#000;"></div>
<span class="t " style="left:678.10px;top:476.46px;font-size:6.5px;color:#f0f03a;transform:scaleX(0.9449);">-3.52</span>
<span class="t " style="left:673.50px;top:493.68px;font-size:7px;color:#e6e6e6;transform:scaleX(0.8737);">Eφ Min</span>
<div style="position:absolute;left:669.20px;top:502.00px;width:31.80px;height:12.90px;background:#000;"></div>
<span class="t " style="left:678.10px;top:505.01px;font-size:6.5px;color:#f0f03a;transform:scaleX(0.9449);">-6.25</span>
</body></html>
